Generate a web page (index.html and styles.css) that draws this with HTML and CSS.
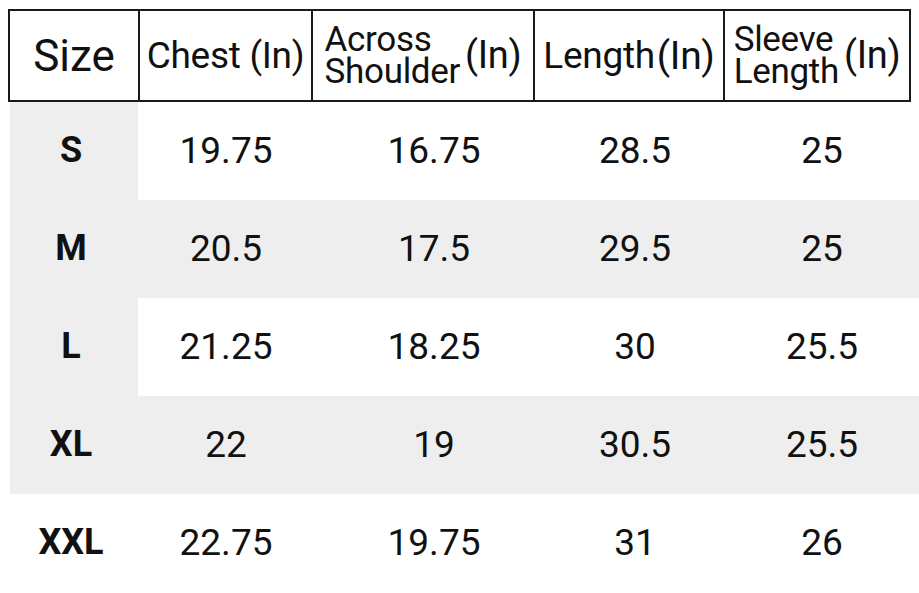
FILE: index.html
```html
<!DOCTYPE html>
<html lang="en">
<head>
    <meta charset="UTF-8">
    <meta name="viewport" content="width=device-width, initial-scale=1.0">
    <title>Size Chart</title>
    <link rel="stylesheet" href="styles.css">
</head>
<body>
    <div class="chart">
        <div class="chart-head">
            <div class="head-cell head-size">Size</div>
            <div class="head-cell"><span>Chest</span>&nbsp;<span>(In)</span></div>
            <div class="head-cell"><span class="stack">Across<br>Shoulder</span><span class="unit">(In)</span></div>
            <div class="head-cell"><span>Length</span><span class="unit">(In)</span></div>
            <div class="head-cell"><span class="stack">Sleeve<br>Length</span><span class="unit">(In)</span></div>
        </div>

        <div class="chart-body">
            <div class="row">
                <div class="cell size">S</div>
                <div class="cell">19.75</div>
                <div class="cell">16.75</div>
                <div class="cell">28.5</div>
                <div class="cell last">25</div>
            </div>
            <div class="row shaded">
                <div class="cell size">M</div>
                <div class="cell">20.5</div>
                <div class="cell">17.5</div>
                <div class="cell">29.5</div>
                <div class="cell last">25</div>
            </div>
            <div class="row">
                <div class="cell size">L</div>
                <div class="cell">21.25</div>
                <div class="cell">18.25</div>
                <div class="cell">30</div>
                <div class="cell last">25.5</div>
            </div>
            <div class="row shaded">
                <div class="cell size">XL</div>
                <div class="cell">22</div>
                <div class="cell">19</div>
                <div class="cell">30.5</div>
                <div class="cell last">25.5</div>
            </div>
            <div class="row">
                <div class="cell size plain">XXL</div>
                <div class="cell">22.75</div>
                <div class="cell">19.75</div>
                <div class="cell">31</div>
                <div class="cell last">26</div>
            </div>
        </div>
    </div>
</body>
</html>
```

FILE: styles.css
```css
body {
    font-family: Roboto, "Liberation Sans", sans-serif;
    margin: 0;
    padding: 0;
    background-color: #fff;
    color: #111;
    overflow: hidden;
}
.chart {
    width: 919px;
    height: 593px;
    padding-top: 9px;
    box-sizing: border-box;
}
.chart-head {
    margin-left: 8px;
    width: 903px;
    height: 93px;
    box-sizing: border-box;
    border: 2px solid #1a1a1a;
    display: grid;
    grid-template-columns: 128px 173px 222px 190px 1fr;
}
.head-cell {
    display: flex;
    align-items: center;
    justify-content: center;
    border-left: 2px solid #1a1a1a;
    font-size: 37px;
    letter-spacing: -0.3px;
    white-space: nowrap;
}
.head-cell.head-size {
    border-left: none;
    font-size: 44px;
    letter-spacing: 0;
}
.stack {
    font-size: 35px;
    line-height: 32px;
}
.unit {
    font-size: 39px;
    margin-left: 2px;
}
.stack + .unit {
    margin-left: 5px;
    font-size: 38px;
    padding-bottom: 2px;
}
.chart-body {
    margin-left: 10px;
}
.row {
    display: grid;
    grid-template-columns: 128px 176px 240px 162px 1fr;
    height: 98px;
}
.row.shaded {
    background-color: #eeeeee;
}
.cell {
    display: flex;
    align-items: center;
    justify-content: center;
    font-size: 37px;
    padding-bottom: 2px;
}
.cell.size {
    background-color: #eeeeee;
    font-weight: bold;
    font-size: 36px;
    padding-right: 6px;
}
.cell.size.plain {
    background-color: transparent;
}
.cell.last {
    padding-left: 9px;
}
```
